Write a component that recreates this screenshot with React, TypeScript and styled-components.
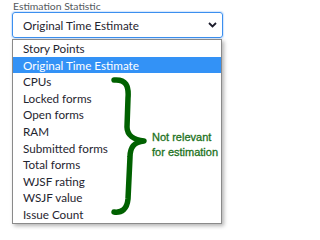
import React from "react";
import styled, { createGlobalStyle } from "styled-components";

const GlobalStyle = createGlobalStyle`
  html, body {
    margin: 0;
    padding: 0;
    background: #ffffff;
  }
  body {
    font-family: Lato, "Liberation Sans", sans-serif;
  }
`;

const options = [
  "Story Points",
  "Original Time Estimate",
  "CPUs",
  "Locked forms",
  "Open forms",
  "RAM",
  "Submitted forms",
  "Total forms",
  "WJSF rating",
  "WSJF value",
  "Issue Count",
];

const selected = "Original Time Estimate";

const App = () => {
  return (
    <>
      <GlobalStyle />
      <Page>
        <Field>
          <Label>Estimation Statistic</Label>
          <SelectBox>
            <SelectValue>{selected}</SelectValue>
            <Chevron width="9" height="6" viewBox="0 0 9 6">
              <path d="M1 1 L4.5 4.5 L8 1" fill="none" stroke="#1b1b2b" strokeWidth="1.8" />
            </Chevron>
          </SelectBox>
          <ListBox>
            {options.map((o) => (
              <Option key={o} active={o === selected}>
                {o}
              </Option>
            ))}
            <Note>
              <Brace width="40" height="142" viewBox="0 0 40 142">
                <path
                  d="M3 3 C15 2 18 9 17 21 L16 50 C16 58 23 63 33 64 C23 65 19 70 19 80 L17 122 C16 132 11 136 3 135"
                  fill="none"
                  stroke="#006100"
                  strokeWidth="5.5"
                  strokeLinecap="round"
                  strokeLinejoin="round"
                />
              </Brace>
              <NoteText>
                Not relevant
                <br />
                for estimation
              </NoteText>
            </Note>
          </ListBox>
        </Field>
      </Page>
    </>
  );
};

export default App;

const Page = styled.div`
  width: 243px;
  height: 230px;
  padding: 0 0 0 12px;
  box-sizing: border-box;
`;

const Field = styled.div`
  display: flex;
  flex-direction: column;
  width: 211px;
`;

const Label = styled.div`
  font-size: 10.4px;
  line-height: 12px;
  color: #555a60;
  padding-left: 1px;
`;

const SelectBox = styled.div`
  display: flex;
  align-items: center;
  justify-content: space-between;
  height: 24px;
  border: 1px solid #3b8fef;
  border-radius: 3px;
  box-shadow: 0 0 1px 1px rgba(80, 150, 240, 0.25);
  padding: 0 5px 0 10px;
`;

const SelectValue = styled.span`
  font-size: 11.7px;
  color: #1f2530;
`;

const Chevron = styled.svg`
  display: block;
`;

const ListBox = styled.div`
  position: relative;
  margin-top: 1px;
  width: 210px;
  border: 1px solid #8a8a8a;
  box-sizing: border-box;
  box-shadow: 2px 2px 4px rgba(0, 0, 0, 0.3);
  background: #fff;
`;

const Option = styled.div<{ active: boolean }>`
  height: 16.6px;
  line-height: 16.6px;
  padding-left: 10px;
  font-size: 11.7px;
  color: ${(p) => (p.active ? "#ffffff" : "#1f2530")};
  background: ${(p) => (p.active ? "#3392f6" : "transparent")};
  white-space: nowrap;
`;

const Note = styled.div`
  position: absolute;
  left: 98px;
  top: 37px;
  display: flex;
  align-items: flex-start;
`;

const Brace = styled.svg`
  display: block;
`;

const NoteText = styled.div`
  margin-top: 53px;
  margin-left: 1px;
  font-family: "Liberation Sans", sans-serif;
  font-size: 11px;
  line-height: 14.5px;
  color: #1d721d;
  -webkit-text-stroke: 0.3px #1d721d;
  white-space: nowrap;
`;
